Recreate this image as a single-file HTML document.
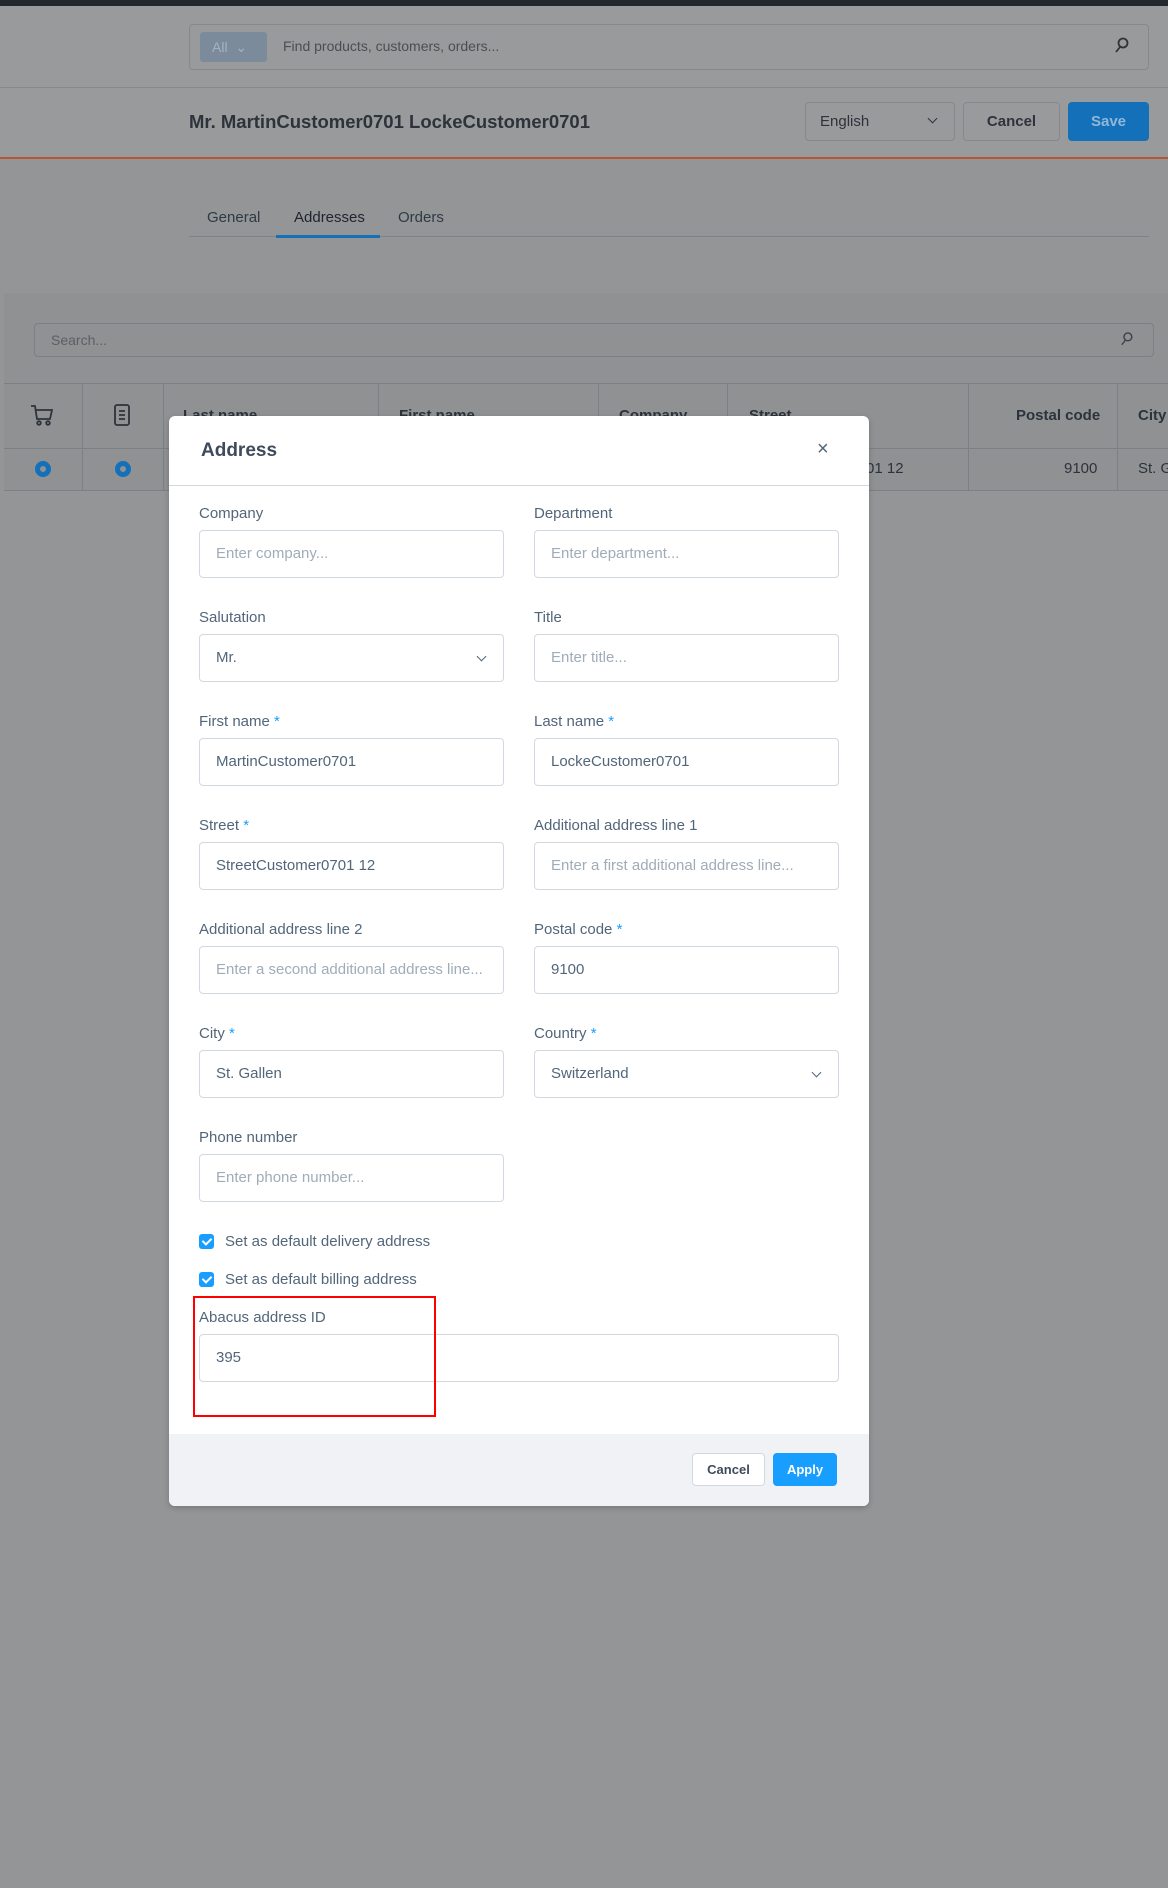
<!DOCTYPE html>
<html><head><meta charset="utf-8"><style>
*{box-sizing:border-box;margin:0;padding:0}
body{width:1168px;height:1888px;position:relative;background:#949596;font-family:"Liberation Sans",sans-serif;overflow:hidden;color:#3f4b5c}
.a{position:absolute;white-space:nowrap}
.lbl{position:absolute;font-size:15px;color:#52667a;white-space:nowrap}
.lbl b{color:#189eff;font-weight:normal}
.inp{position:absolute;height:48px;border:1px solid #d1d9e0;border-radius:4px;background:#fff;font-size:15px;padding:0 16px;line-height:46px;color:#52667a;white-space:nowrap;overflow:hidden}
.ph{color:#a0acb8}
.chev{position:absolute;right:18px;top:18px;width:7px;height:7px;border-right:1.6px solid #52667a;border-bottom:1.6px solid #52667a;transform:rotate(45deg)}
.cb{position:absolute;width:15px;height:15px;border-radius:3px;background:#189eff}
.cb:after{content:"";position:absolute;left:5px;top:2px;width:4px;height:7px;border-right:2px solid #fff;border-bottom:2px solid #fff;transform:rotate(45deg)}
.col{position:absolute;top:383px;height:107px;border-left:1px solid #7c7f83}
.th{position:absolute;top:407px;font-size:15px;font-weight:bold;color:#2c333b;white-space:nowrap}
</style></head><body>
<div class="a" style="left:0;top:0;width:1168px;height:6px;background:#23272e"></div>
<div class="a" style="left:0;top:6px;width:1168px;height:151px;background:#999a9b"></div>
<div class="a" style="left:0;top:87px;width:1168px;height:1px;background:#86888b"></div>
<div class="a" style="left:189px;top:24px;width:960px;height:46px;border:1px solid #86888b;border-radius:4px"></div>
<div class="a" style="left:200px;top:32px;width:67px;height:30px;background:#7c8b9b;border-radius:3px;color:#a6b2bf;font-size:14px;line-height:30px;padding-left:12px">All &nbsp;⌄</div>
<div class="a" style="left:283px;top:38px;font-size:14px;color:#4a4e54">Find products, customers, orders...</div>
<svg class="a" style="left:1114px;top:37px" width="16" height="18" viewBox="0 0 16 18"><circle cx="9" cy="6" r="4.5" fill="none" stroke="#333" stroke-width="1.8"/><path d="M6 10L2 15" stroke="#333" stroke-width="1.8"/></svg>
<div class="a" style="left:189px;top:111px;font-size:18.5px;font-weight:bold;color:#2c333b">Mr. MartinCustomer0701 LockeCustomer0701</div>
<div class="a" style="left:805px;top:102px;width:150px;height:39px;border:1px solid #86888b;border-radius:4px;font-size:15px;line-height:37px;padding-left:14px;color:#2c333b">English<div class="chev" style="top:12px;border-color:#2c333b"></div></div>
<div class="a" style="left:963px;top:102px;width:97px;height:39px;border:1px solid #86888b;border-radius:4px;font-size:15px;font-weight:bold;line-height:37px;text-align:center;color:#2c333b">Cancel</div>
<div class="a" style="left:1068px;top:102px;width:81px;height:39px;background:#1470b8;border-radius:4px;font-size:15px;font-weight:bold;line-height:39px;text-align:center;color:#8fb7d8">Save</div>
<div class="a" style="left:0;top:157px;width:1168px;height:2px;background:#b5553a"></div>
<div class="a" style="left:207px;top:209px;font-size:15px;color:#2f3a46">General</div>
<div class="a" style="left:294px;top:209px;font-size:15px;color:#1c2530">Addresses</div>
<div class="a" style="left:398px;top:209px;font-size:15px;color:#2f3a46">Orders</div>
<div class="a" style="left:189px;top:236px;width:960px;height:1px;background:#7c8188"></div>
<div class="a" style="left:276px;top:235px;width:104px;height:3px;background:#1470b8"></div>
<div class="a" style="left:4px;top:293px;width:1164px;height:197px;background:#8f9193"></div>
<div class="a" style="left:34px;top:323px;width:1120px;height:34px;border:1px solid #7c7f83;border-radius:4px;font-size:14px;line-height:32px;padding-left:16px;color:#5a6068">Search...</div>
<svg class="a" style="left:1120px;top:331px" width="14" height="17" viewBox="0 0 16 18"><circle cx="9" cy="6" r="4.5" fill="none" stroke="#3b4048" stroke-width="1.6"/><path d="M6 10L2 15" stroke="#3b4048" stroke-width="1.6"/></svg>
<div class="a" style="left:4px;top:383px;width:1164px;height:1px;background:#7c7f83"></div>
<div class="a" style="left:4px;top:448px;width:1164px;height:1px;background:#7c7f83"></div>
<div class="a" style="left:4px;top:490px;width:1164px;height:1px;background:#7c7f83"></div>
<div class="col" style="left:82px"></div><div class="col" style="left:163px"></div><div class="col" style="left:378px"></div><div class="col" style="left:598px"></div><div class="col" style="left:727px"></div><div class="col" style="left:968px"></div><div class="col" style="left:1117px"></div>
<svg class="a" style="left:30px;top:403px" width="24" height="24" viewBox="0 0 24 24" fill="none" stroke="#2c333b" stroke-width="1.8"><path d="M1 3h4l2 13h13l2-9H6"/><circle cx="9" cy="20" r="1.8"/><circle cx="18" cy="20" r="1.8"/></svg>
<svg class="a" style="left:113px;top:403px" width="18" height="24" viewBox="0 0 18 24" fill="none" stroke="#2c333b" stroke-width="1.8"><rect x="2" y="2" width="14" height="20" rx="2"/><path d="M6 8h6M6 12h6M6 16h6"/></svg>
<div class="th" style="left:183px">Last name</div>
<div class="th" style="left:399px">First name</div>
<div class="th" style="left:619px">Company</div>
<div class="th" style="left:749px">Street</div>
<div class="a" style="left:1016px;top:407px;font-size:15px;font-weight:bold;color:#2c333b">Postal code</div>
<div class="a" style="left:1138px;top:407px;font-size:15px;font-weight:bold;color:#2c333b">City</div>
<div class="a" style="left:35px;top:461px;width:16px;height:16px;border-radius:50%;border:5px solid #1470b8;background:#8f9193"></div>
<div class="a" style="left:115px;top:461px;width:16px;height:16px;border-radius:50%;border:5px solid #1470b8;background:#8f9193"></div>
<div class="a" style="left:866px;top:460px;font-size:15px;color:#2c333b">01 12</div>
<div class="a" style="left:1064px;top:460px;font-size:15px;color:#2c333b">9100</div>
<div class="a" style="left:1138px;top:460px;font-size:15px;color:#2c333b">St. G</div>

<div class="a" style="left:169px;top:416px;width:700px;height:1090px;background:#fff;border-radius:6px;overflow:hidden;box-shadow:0 2px 6px rgba(0,0,0,.2)">
<div class="a" style="left:32px;top:24px;font-size:19px;font-weight:bold;color:#3f4b5c">Address</div>
<div class="a" style="left:648px;top:22px;font-size:20px;color:#52667a">×</div>
<div class="a" style="left:0;top:69px;width:700px;height:1px;background:#d1d9e0"></div>
<div class="a" style="left:0;top:1018px;width:700px;height:72px;background:#f0f2f5"></div>
<div class="a" style="left:523px;top:1037px;width:73px;height:33px;border:1px solid #d1d9e0;border-radius:4px;background:#fff;font-size:13px;font-weight:bold;line-height:31px;text-align:center;color:#3f4b5c">Cancel</div>
<div class="a" style="left:604px;top:1037px;width:64px;height:33px;border-radius:4px;background:#189eff;font-size:13px;font-weight:bold;line-height:33px;text-align:center;color:#fff">Apply</div>
</div>

<div class="lbl" style="left:199px;top:505px">Company</div>
<div class="lbl" style="left:534px;top:505px">Department</div>
<div class="inp" style="left:199px;top:530px;width:305px"><span class="ph">Enter company...</span></div>
<div class="inp" style="left:534px;top:530px;width:305px"><span class="ph">Enter department...</span></div>

<div class="lbl" style="left:199px;top:609px">Salutation</div>
<div class="lbl" style="left:534px;top:609px">Title</div>
<div class="inp" style="left:199px;top:634px;width:305px">Mr.<div class="chev"></div></div>
<div class="inp" style="left:534px;top:634px;width:305px"><span class="ph">Enter title...</span></div>

<div class="lbl" style="left:199px;top:713px">First name <b>*</b></div>
<div class="lbl" style="left:534px;top:713px">Last name <b>*</b></div>
<div class="inp" style="left:199px;top:738px;width:305px">MartinCustomer0701</div>
<div class="inp" style="left:534px;top:738px;width:305px">LockeCustomer0701</div>

<div class="lbl" style="left:199px;top:817px">Street <b>*</b></div>
<div class="lbl" style="left:534px;top:817px">Additional address line 1</div>
<div class="inp" style="left:199px;top:842px;width:305px">StreetCustomer0701 12</div>
<div class="inp" style="left:534px;top:842px;width:305px"><span class="ph">Enter a first additional address line...</span></div>

<div class="lbl" style="left:199px;top:921px">Additional address line 2</div>
<div class="lbl" style="left:534px;top:921px">Postal code <b>*</b></div>
<div class="inp" style="left:199px;top:946px;width:305px"><span class="ph">Enter a second additional address line...</span></div>
<div class="inp" style="left:534px;top:946px;width:305px">9100</div>

<div class="lbl" style="left:199px;top:1025px">City <b>*</b></div>
<div class="lbl" style="left:534px;top:1025px">Country <b>*</b></div>
<div class="inp" style="left:199px;top:1050px;width:305px">St. Gallen</div>
<div class="inp" style="left:534px;top:1050px;width:305px">Switzerland<div class="chev"></div></div>

<div class="lbl" style="left:199px;top:1129px">Phone number</div>
<div class="inp" style="left:199px;top:1154px;width:305px"><span class="ph">Enter phone number...</span></div>

<div class="cb" style="left:199px;top:1234px"></div>
<div class="lbl" style="left:225px;top:1233px">Set as default delivery address</div>
<div class="cb" style="left:199px;top:1272px"></div>
<div class="lbl" style="left:225px;top:1271px">Set as default billing address</div>

<div class="lbl" style="left:199px;top:1309px">Abacus address ID</div>
<div class="inp" style="left:199px;top:1334px;width:640px">395</div>
<div class="a" style="left:193px;top:1296px;width:243px;height:121px;border:2px solid #f00"></div>
</body></html>
